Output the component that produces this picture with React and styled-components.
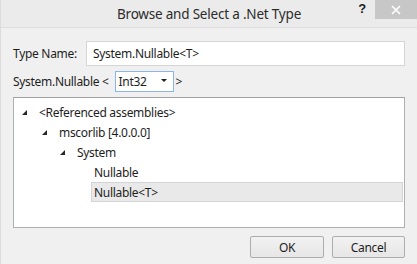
import React from "react";
import styled, { createGlobalStyle } from "styled-components";

const Global = createGlobalStyle`
  html, body { margin: 0; padding: 0; }
  body {
    width: 417px; height: 264px; overflow: hidden;
    font-family: "Noto Sans", "Open Sans", sans-serif;
    font-size: 12px; letter-spacing: -0.3px; color: #1e1e1e; background: #f0f0f0;
  }
`;

const Window = styled.div`
  width: 417px; height: 264px; box-sizing: border-box;
  display: flex; flex-direction: column;
  background: #f0f0f0;
  border-left: 1px solid #dcdcdc;
`;

const TitleBar = styled.div`
  height: 28px; box-sizing: border-box;
  display: grid; grid-template-columns: 1fr auto 1fr;
  background: #ebebeb; border-bottom: 1px solid #dedede;
`;

const Title = styled.div`
  grid-column: 2; align-self: center;
  font-size: 13.5px; color: #2b2b2b; letter-spacing: -0.2px;
  padding-top: 1px;
`;

const Controls = styled.div`
  grid-column: 3; justify-self: end; align-self: start;
  display: flex; align-items: flex-start;
`;

const Help = styled.div`
  font-family: "Liberation Sans", sans-serif; font-weight: bold;
  font-size: 13px; color: #222; padding: 2px 9px 0 0; line-height: 14px;
`;

const Close = styled.div`
  width: 42px; height: 19px; background: #c7c7c7;
  display: flex; align-items: center; justify-content: center;
`;

const Body = styled.div`
  flex: 1; display: flex; flex-direction: column;
  padding: 13px 12px 0 12px;
`;

const Row = styled.div`
  display: flex; align-items: center;
  margin-bottom: ${p => p.$mb || 0}px;
`;

const Label = styled.span`
  color: #1e1e1e; white-space: nowrap;
  ${p => (p.$w ? `width: ${p.$w}px; flex: none;` : "")}
`;

const TextInput = styled.div`
  flex: 1; height: 25px; box-sizing: border-box;
  background: #fff; border: 1px solid #d5d5d5;
  display: flex; align-items: center; padding-left: 6px;
`;

const Combo = styled.div`
  width: 59px; height: 21px; box-sizing: border-box;
  background: #fff; border: 1px solid #8ab5e8;
  display: flex; align-items: center; justify-content: space-between;
  padding: 0 6px 0 3px; margin: 0 2px 0 6px;
`;

const Arrow = styled.span`
  width: 0; height: 0;
  border-left: 3px solid transparent; border-right: 3px solid transparent;
  border-top: 3px solid #1e1e1e; margin-top: -2px;
`;

const TreeBox = styled.div`
  height: 131px; box-sizing: border-box; margin-top: 5px;
  background: #fff; border: 1px solid #aeaeb5; border-top-color: #a0a0a0;
  padding-top: 4px; display: flex; flex-direction: column;
`;

const TreeRow = styled.div`
  height: 20px; box-sizing: border-box;
  display: flex; align-items: center;
  margin-left: ${p => p.$indent}px; margin-right: 1px;
  padding-left: ${p => (p.$leaf ? 2 : 0)}px;
  background: ${p => (p.$selected ? "#e9e9e9" : "transparent")};
  border: 1px solid ${p => (p.$selected ? "#d4d4d4" : "transparent")};
`;

const Expander = styled.span`
  width: 0; height: 0; margin-right: 12px; margin-left: 2px;
  border-left: 5px solid transparent; border-bottom: 5px solid #262626;
`;

const Footer = styled.div`
  display: flex; justify-content: flex-end; gap: 8px;
  margin-top: 8px;
`;

const Button = styled.button`
  width: ${p => p.$w}px; height: 22px; box-sizing: border-box;
  font-family: inherit; font-size: 12px; letter-spacing: -0.3px; color: #1e1e1e;
  background: linear-gradient(#f2f2f2, #e6e6e6);
  border: 1px solid #adadad; border-radius: 2px; padding: 0;
`;

const tree = [
  { label: "<Referenced assemblies>", indent: 5 },
  { label: "mscorlib [4.0.0.0]", indent: 25 },
  { label: "System", indent: 43 },
  { label: "Nullable", indent: 77, leaf: true },
  { label: "Nullable<T>", indent: 77, leaf: true, selected: true },
];

export default function App() {
  return (
    <>
      <Global />
      <Window>
        <TitleBar>
          <Title>Browse and Select a .Net Type</Title>
          <Controls>
            <Help>?</Help>
            <Close>
              <svg width="10" height="10" viewBox="0 0 10 10">
                <path d="M1 1 L9 9 M9 1 L1 9" stroke="#fff" strokeWidth="1.6" />
              </svg>
            </Close>
          </Controls>
        </TitleBar>
        <Body>
          <Row $mb={5}>
            <Label $w={73}>Type Name:</Label>
            <TextInput>System.Nullable&lt;T&gt;</TextInput>
          </Row>
          <Row>
            <Label>System.Nullable &lt;</Label>
            <Combo>
              <span>Int32</span>
              <Arrow />
            </Combo>
            <Label>&gt;</Label>
          </Row>
          <TreeBox>
            {tree.map((t) => (
              <TreeRow key={t.label} $indent={t.indent} $leaf={t.leaf} $selected={t.selected}>
                {!t.leaf && <Expander />}
                {t.label}
              </TreeRow>
            ))}
          </TreeBox>
          <Footer>
            <Button $w={74}>OK</Button>
            <Button $w={73}>Cancel</Button>
          </Footer>
        </Body>
      </Window>
    </>
  );
}
